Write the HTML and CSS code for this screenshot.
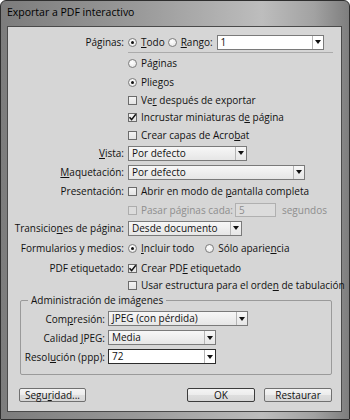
FILE: index.html
```html
<!DOCTYPE html>
<html lang="es">
<head>
    <meta charset="UTF-8">
    <title>Exportar a PDF interactivo</title>
    <link rel="stylesheet" href="styles.css">
</head>
<body>
    <div class="window">
        <div class="titlebar">Exportar a PDF interactivo</div>
        <div class="client">
            <div class="form">
                <div class="label">Páginas:</div>
                <div class="ctrl">
                    <span class="radio on"></span><span class="txt"><u>T</u>odo</span>
                    <span class="radio gap"></span><span class="txt"><u>R</u>ango:</span>
                    <div class="select edit w-rango"><span class="val">1</span><span class="arrow"></span></div>
                </div>

                <div class="sep"></div>

                <div class="label"></div>
                <div class="ctrl"><span class="radio"></span><span class="txt">Pá<u>g</u>inas</span></div>

                <div class="label"></div>
                <div class="ctrl"><span class="radio on"></span><span class="txt">Plie<u>g</u>os</span></div>

                <div class="label"></div>
                <div class="ctrl"><span class="check"></span><span class="txt">Ve<u>r</u> después de exportar</span></div>

                <div class="label"></div>
                <div class="ctrl"><span class="check on"><svg viewBox="0 0 9 9"><path d="M1.5 4.2 L3.6 6.6 L7.8 1.2"/></svg></span><span class="txt">Incrustar miniaturas d<u>e</u> página</span></div>

                <div class="label"></div>
                <div class="ctrl"><span class="check"></span><span class="txt">Crear capas de Acro<u>b</u>at</span></div>

                <div class="label"><u>V</u>ista:</div>
                <div class="ctrl"><div class="select w-vista"><span class="val">Por defecto</span><span class="arrow"></span></div></div>

                <div class="label"><u>M</u>aquetación:</div>
                <div class="ctrl"><div class="select w-maq"><span class="val">Por defecto</span><span class="arrow"></span></div></div>

                <div class="label">Presentación:</div>
                <div class="ctrl"><span class="check"></span><span class="txt">Abrir en modo de <u>p</u>antalla completa</span></div>

                <div class="label"></div>
                <div class="ctrl off">
                    <span class="check"></span><span class="txt">Pasar pá<u>g</u>inas cada:</span>
                    <div class="field">5</div>
                    <span class="txt">segundos</span>
                </div>

                <div class="label">Transicio<u>n</u>es de página:</div>
                <div class="ctrl"><div class="select w-trans"><span class="val">Desde documento</span><span class="arrow"></span></div></div>

                <div class="label">Formularios y medios:</div>
                <div class="ctrl">
                    <span class="radio on"></span><span class="txt"><u>I</u>ncluir todo</span>
                    <span class="radio gap2"></span><span class="txt">Sólo aparie<u>n</u>cia</span>
                </div>

                <div class="label">PDF etiquetado:</div>
                <div class="ctrl"><span class="check on"><svg viewBox="0 0 9 9"><path d="M1.5 4.2 L3.6 6.6 L7.8 1.2"/></svg></span><span class="txt">Crear PD<u>F</u> etiquetado</span></div>

                <div class="label"></div>
                <div class="ctrl"><span class="check"></span><span class="txt">Usar estructura para el orde<u>n</u> de tabulación</span></div>
            </div>

            <fieldset class="group">
                <legend>Administración de imágenes</legend>
                <div class="group-form">
                    <div class="label">Com<u>p</u>resión:</div>
                    <div class="ctrl"><div class="select w-comp"><span class="val">JPEG (con pérdida)</span><span class="arrow"></span></div></div>

                    <div class="label">Calidad <u>J</u>PEG:</div>
                    <div class="ctrl"><div class="select w-cal"><span class="val">Media</span><span class="arrow"></span></div></div>

                    <div class="label">Resol<u>u</u>ción (ppp):</div>
                    <div class="ctrl"><div class="select edit focus w-cal"><span class="val">72</span><span class="arrow"></span></div></div>
                </div>
            </fieldset>

            <div class="buttons">
                <button class="btn">Segu<u>r</u>idad...</button>
                <span class="spacer"></span>
                <button class="btn default">OK</button>
                <button class="btn">Restaurar</button>
            </div>
        </div>
    </div>
</body>
</html>
```

FILE: styles.css
```css
body {
    margin: 0;
    font-family: "Open Sans", "Noto Sans", sans-serif;
    font-size: 10px;
    color: #111;
}
u {
    text-underline-offset: 1px;
}
.window {
    width: 350px;
    height: 420px;
    box-sizing: border-box;
    border: 1px solid #2e2e2e;
    border-radius: 6px 6px 0 0;
    padding: 0 7px 7px 6px;
    background: linear-gradient(to right, #7c7c7c 0%, #9a9a9a 40%, #bdbdbd 75%, #a2a2a2 90%, #7e7e7e 100%);
}
.titlebar {
    height: 25px;
    line-height: 23px;
    font-size: 10.5px;
    color: #000;
}
.client {
    height: 386px;
    box-sizing: border-box;
    border: 1px solid #4a4a4a;
    background: #d6d6d6;
}
.form {
    display: grid;
    grid-template-columns: 116px 1fr;
    grid-template-rows: 18px 3px 18px 20px 16px 18px 18px 18px 20px 18px 20px 16px 24px 16px 18px;
    column-gap: 4px;
    padding-top: 6px;
}
.label {
    align-self: center;
    text-align: right;
    white-space: nowrap;
}
.ctrl {
    display: flex;
    align-items: center;
    white-space: nowrap;
}
.ctrl.off {
    color: #8e8e8e;
}
.sep {
    grid-column: 2;
    margin-right: 12px;
    border-top: 1px solid #ababab;
    align-self: center;
}
.txt {
    margin-left: 4px;
}
.radio {
    width: 9px;
    height: 9px;
    box-sizing: border-box;
    border: 1px solid #7d7d7d;
    border-radius: 50%;
    background: radial-gradient(circle at 40% 35%, #ffffff, #e2e2e2);
    display: flex;
    align-items: center;
    justify-content: center;
    flex: none;
}
.radio.on::after {
    content: "";
    width: 3px;
    height: 3px;
    border-radius: 50%;
    background: #111;
}
.radio.gap {
    margin-left: 3px;
}
.radio.gap2 {
    margin-left: 11px;
}
.check {
    width: 9px;
    height: 9px;
    box-sizing: border-box;
    border: 1px solid #6b6b6b;
    background: linear-gradient(#f4f4f4, #e4e4e4);
    flex: none;
    display: flex;
}
.ctrl.off .check {
    border-color: #adadad;
    background: #dcdcdc;
}
.check svg {
    width: 9px;
    height: 9px;
    margin: -1px 0 0 -1px;
    overflow: visible;
}
.check path {
    fill: none;
    stroke: #111;
    stroke-width: 1.5;
}
.select {
    display: flex;
    height: 15px;
    box-sizing: border-box;
    border: 1px solid #7a7a7a;
    background: linear-gradient(#f7f7f7, #e6e6e6);
}
.select.edit {
    background: #fff;
}
.select.focus {
    border-color: #2c2c2c;
}
.select .val {
    flex: 1;
    padding-left: 3px;
    line-height: 13px;
    color: #111;
}
.select .arrow {
    width: 10px;
    border-left: 1px solid #b5b5b5;
    display: flex;
    align-items: center;
    justify-content: center;
}
.select .arrow::after {
    content: "";
    border-left: 3px solid transparent;
    border-right: 3px solid transparent;
    border-top: 4px solid #111;
}
.w-rango {
    width: 107px;
    margin-left: 4px;
}
.w-vista { width: 119px; }
.w-maq { width: 177px; }
.w-trans { width: 114px; }
.w-comp { width: 140px; }
.w-cal { width: 108px; }
.field {
    width: 41px;
    height: 14px;
    margin-left: 2px;
    border: 1px solid #b0b0b0;
    background: #dcdcdc;
    padding-left: 3px;
    line-height: 12px;
    box-sizing: border-box;
    color: #8e8e8e;
}
.field + .txt {
    margin-left: 6px;
}
.group {
    margin: 0 9px 0 12px;
    padding: 3px 0 8px 0;
    border: 1px solid #9a9a9a;
    border-radius: 2px;
}
.group legend {
    margin-left: 7px;
    padding: 0 3px;
    line-height: 12px;
}
.group-form {
    display: grid;
    grid-template-columns: 84px 1fr;
    grid-auto-rows: 19px;
    column-gap: 3px;
}
.buttons {
    display: flex;
    margin: 13px 9px 0 11px;
}
.spacer {
    flex: 1;
}
.btn {
    width: 67px;
    height: 14px;
    padding: 0;
    font: inherit;
    line-height: 12px;
    color: #111;
    border: 1px solid #707070;
    border-radius: 2px;
    background: linear-gradient(#f4f4f4 0%, #ececec 50%, #dedede 51%, #d6d6d6 100%);
}
.btn.default {
    width: 68px;
    border-color: #3c3c3c;
    margin-right: 9px;
}
.btn + .btn {
    width: 68px;
}
```
